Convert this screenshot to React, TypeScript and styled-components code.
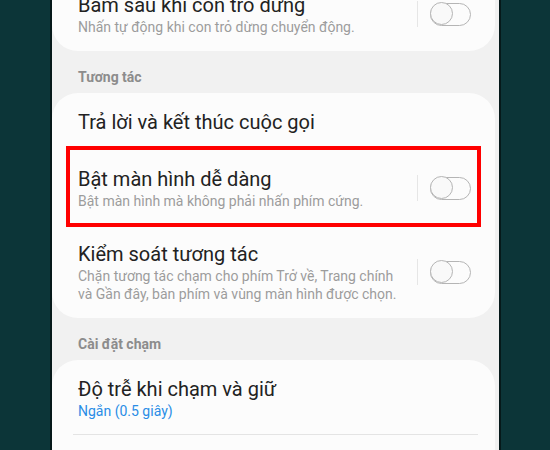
import styled, { createGlobalStyle } from "styled-components";

const GlobalStyle = createGlobalStyle`
  html, body {
    margin: 0;
    padding: 0;
    background: #0c3538;
    overflow: hidden;
  }
  body {
    font-family: Roboto, "Noto Sans", "Liberation Sans", sans-serif;
    -webkit-font-smoothing: antialiased;
  }
`;

type Row = {
  title: string;
  subtitle?: string[];
  value?: string;
  toggle?: boolean;
  highlight?: boolean;
  divider?: boolean;
};

type Section = {
  header?: string;
  rows: Row[];
};

const sections: Section[] = [
  {
    rows: [
      {
        title: "Bấm sau khi con trỏ dừng",
        subtitle: ["Nhấn tự động khi con trỏ dừng chuyển động."],
        toggle: true,
      },
    ],
  },
  {
    header: "Tương tác",
    rows: [
      { title: "Trả lời và kết thúc cuộc gọi" },
      {
        title: "Bật màn hình dễ dàng",
        subtitle: ["Bật màn hình mà không phải nhấn phím cứng."],
        toggle: true,
        highlight: true,
      },
      {
        title: "Kiểm soát tương tác",
        subtitle: [
          "Chặn tương tác chạm cho phím Trở về, Trang chính",
          "và Gần đây, bàn phím và vùng màn hình được chọn.",
        ],
        toggle: true,
      },
    ],
  },
  {
    header: "Cài đặt chạm",
    rows: [
      {
        title: "Độ trễ khi chạm và giữ",
        value: "Ngắn (0.5 giây)",
        divider: true,
      },
    ],
  },
];

function Switch() {
  return (
    <SwitchWrap>
      <SwitchDivider />
      <Track>
        <Thumb />
      </Track>
    </SwitchWrap>
  );
}

export default function App() {
  return (
    <>
      <GlobalStyle />
      <Page>
        <Screen>
          <List>
            {sections.map((section, si) => (
              <div key={si}>
                {section.header && <SectionHeader>{section.header}</SectionHeader>}
                <Card $open={si === sections.length - 1}>
                  {section.rows.map((row, ri) => (
                    <RowItem key={ri} $divider={row.divider}>
                      <RowText>
                        <Title>{row.title}</Title>
                        {row.subtitle && (
                          <Subtitle>
                            {row.subtitle.map((line, li) => (
                              <div key={li}>{line}</div>
                            ))}
                          </Subtitle>
                        )}
                        {row.value && <Value>{row.value}</Value>}
                      </RowText>
                      {row.toggle && <Switch />}
                      {row.highlight && <HighlightFrame />}
                    </RowItem>
                  ))}
                </Card>
              </div>
            ))}
          </List>
        </Screen>
      </Page>
    </>
  );
}

const Page = styled.div`
  width: 550px;
  height: 450px;
  display: flex;
  overflow: hidden;
`;

const Screen = styled.div`
  margin-left: 50px;
  width: 447px;
  height: 450px;
  background: #f1f1f1;
  border-left: 2px solid #06191a;
  border-right: 2px solid #06191a;
  overflow: hidden;
`;

const List = styled.div`
  margin-top: -24px;
  display: flex;
  flex-direction: column;
`;

const SectionHeader = styled.div`
  padding: 17px 26px 7px;
  font-size: 14px;
  line-height: 18px;
  font-weight: 700;
  color: #8c8c8c;
`;

/* the last card keeps going past the bottom of the screen */
const Card = styled.div<{ $open?: boolean }>`
  margin-right: 4px;
  min-height: ${(p) => (p.$open ? "120px" : "0")};
  background: #fcfcfc;
  border-radius: 26px;
`;

const RowItem = styled.div<{ $divider?: boolean }>`
  position: relative;
  display: flex;
  align-items: center;
  padding: 16px 24px 15px 26px;
  min-height: 26px;

  &::after {
    content: "";
    display: ${(p) => (p.$divider ? "block" : "none")};
    position: absolute;
    left: 21px;
    right: 17px;
    bottom: 0;
    height: 1px;
    background: #e4e4e4;
  }
`;

const RowText = styled.div`
  flex: 1;
  min-width: 0;
`;

const Title = styled.div`
  font-size: 20px;
  line-height: 26px;
  color: #222222;
`;

const Subtitle = styled.div`
  font-size: 14px;
  line-height: 18px;
  color: #9c9c9c;
`;

const Value = styled.div`
  font-size: 14px;
  line-height: 18px;
  color: #2a8de6;
`;

const SwitchWrap = styled.div`
  display: flex;
  align-items: center;
  gap: 12px;
`;

const SwitchDivider = styled.div`
  width: 1px;
  height: 26px;
  background: #e6e6e6;
`;

const Track = styled.div`
  position: relative;
  width: 39px;
  height: 21px;
  border: 1.5px solid #b5b5b5;
  border-radius: 12px;
`;

const Thumb = styled.div`
  position: absolute;
  left: -1.5px;
  top: -1.5px;
  width: 21px;
  height: 21px;
  border: 1.5px solid #b5b5b5;
  border-radius: 50%;
  background: #f9f9f9;
`;

const HighlightFrame = styled.div`
  position: absolute;
  left: 14px;
  right: 14px;
  top: -4px;
  bottom: -2px;
  border: 4px solid #ff0000;
  pointer-events: none;
`;
